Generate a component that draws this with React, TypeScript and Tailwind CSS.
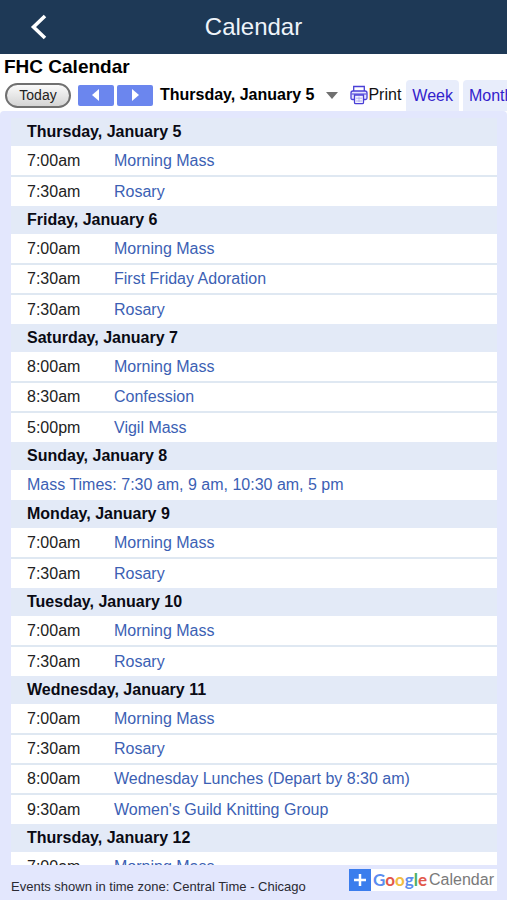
type CalendarEvent = { time?: string; title: string };
type Day = { date: string; events: CalendarEvent[] };

const mass: CalendarEvent = { time: "7:00am", title: "Morning Mass" };
const rosary: CalendarEvent = { time: "7:30am", title: "Rosary" };

const days: Day[] = [
  { date: "Thursday, January 5", events: [mass, rosary] },
  {
    date: "Friday, January 6",
    events: [mass, { time: "7:30am", title: "First Friday Adoration" }, rosary],
  },
  {
    date: "Saturday, January 7",
    events: [
      { time: "8:00am", title: "Morning Mass" },
      { time: "8:30am", title: "Confession" },
      { time: "5:00pm", title: "Vigil Mass" },
    ],
  },
  { date: "Sunday, January 8", events: [{ title: "Mass Times: 7:30 am, 9 am, 10:30 am, 5 pm" }] },
  { date: "Monday, January 9", events: [mass, rosary] },
  { date: "Tuesday, January 10", events: [mass, rosary] },
  {
    date: "Wednesday, January 11",
    events: [
      mass,
      rosary,
      { time: "8:00am", title: "Wednesday Lunches (Depart by 8:30 am)" },
      { time: "9:30am", title: "Women's Guild Knitting Group" },
    ],
  },
  { date: "Thursday, January 12", events: [mass] },
];

function PrinterIcon() {
  return (
    <svg className="h-5 w-[18px] shrink-0" viewBox="0 0 18 20" fill="none" stroke="#4a3fd6" strokeWidth="1.3" aria-hidden="true">
      <path d="M3.700 6V1.500h10.600V6" />
      <path d="M4 14.500H2.500Q1 14.500 1 13V8q0-2 2-2h12q2 0 2 2v5q0 1.500-1.500 1.500H14" fill="#e4e4ff" />
      <path d="M1.500 9h15" strokeWidth="1" />
      <path d="M4.500 10h9v7.500q0 1.200-1.200 1.200H5.700q-1.200 0-1.200-1.200z" fill="#f4f4ff" />
      <path d="M6 13.200h6M6 16h6M9 11.500v5.500" stroke="#a9a6ee" strokeWidth="0.800" />
    </svg>
  );
}

function Toolbar() {
  return (
    <div className="flex h-8 shrink-0 items-end overflow-hidden whitespace-nowrap pl-[5px]">
      <div className="flex h-8 shrink-0 items-center">
        <button className="h-[25px] w-[66px] rounded-full border-2 border-[#707070] bg-gradient-to-b from-[#fafafa] to-[#d4d4d4] text-sm leading-5 text-[#222222]">
          Today
        </button>
        <button aria-label="Previous" className="ml-[7px] flex h-[21px] w-9 items-center justify-center rounded-xs bg-[#6b86ee]">
          <svg className="h-3 w-2" viewBox="0 0 8 12" fill="#ffffff" aria-hidden="true">
            <path d="M7 0v12L0 6z" />
          </svg>
        </button>
        <button aria-label="Next" className="ml-[3px] flex h-[21px] w-9 items-center justify-center rounded-xs bg-[#6b86ee]">
          <svg className="h-3 w-2" viewBox="0 0 8 12" fill="#ffffff" aria-hidden="true">
            <path d="M1 0v12l7-6z" />
          </svg>
        </button>
        <button aria-haspopup="true" className="ml-[7px] flex items-center gap-3 text-base font-bold text-black">
          Thursday, January 5
          <svg className="h-[7px] w-3" viewBox="0 0 12 7" fill="#707070" aria-hidden="true">
            <path d="M0 0h12L6 7z" />
          </svg>
        </button>
        <button className="ml-3 flex items-center text-base text-[#111111]">
          <PrinterIcon />
          Print
        </button>
      </div>
      <nav className="ml-[5px] flex shrink-0 gap-1 text-base text-[#3322cc]">
        <a href="#week" className="flex h-[31px] items-center rounded-t-sm bg-[#e8edfb] px-[6px]">
          Week
        </a>
        <a href="#month" className="flex h-[31px] items-center rounded-t-sm bg-[#e8edfb] px-[6px]">
          Month
        </a>
      </nav>
    </div>
  );
}

function Agenda() {
  return (
    <table className="w-full table-fixed border-collapse text-left text-base leading-5">
      <colgroup>
        <col className="w-[103px]" />
        <col />
      </colgroup>
      {days.map((day) => (
        <tbody key={day.date}>
          <tr className="h-7 bg-[#e3eaf7]">
            <th colSpan={2} scope="rowgroup" className="py-0 pl-4 font-bold text-[#0a0a14]">
              {day.date}
            </th>
          </tr>
          {day.events.map((event) => (
            <tr key={event.title} className="h-[30px] border-b-2 border-[#dfe8f2] bg-white last:border-b-0">
              {event.time && <td className="py-0 pl-4 text-[#222222]">{event.time}</td>}
              <td colSpan={event.time ? 1 : 2} className={event.time ? "py-0" : "py-0 pl-4"}>
                <a href="#event" className="text-[#3c5fb4]">
                  {event.title}
                </a>
              </td>
            </tr>
          ))}
        </tbody>
      ))}
    </table>
  );
}

export default function App() {
  return (
    <div className="flex h-screen flex-col overflow-hidden bg-white font-['Liberation_Sans',Arial,sans-serif]">
      <header className="grid h-[54px] shrink-0 grid-cols-[1fr_auto_1fr] items-center bg-[#1e3956]">
        <button aria-label="Back" className="ml-[30px] w-[17px]">
          <svg className="h-[26px] w-[17px]" viewBox="0 0 17 26" fill="none" stroke="#ffffff" strokeWidth="3.600" aria-hidden="true">
            <path d="M15 2 3.500 13 15 24" />
          </svg>
        </button>
        <h1 className="text-2xl text-[#eef4fa]">Calendar</h1>
      </header>
      <h2 className="h-[25px] shrink-0 pl-1 text-[19px] leading-[25px] font-bold text-black">FHC Calendar</h2>
      <Toolbar />
      <main className="flex min-h-0 flex-1 flex-col rounded-t-sm bg-[#e3e7fd] pt-[7px] pr-[10px] pl-[11px]">
        <div className="min-h-0 flex-1 overflow-y-auto [scrollbar-width:none]">
          <Agenda />
        </div>
        <footer className="flex h-[35px] shrink-0 items-start justify-between whitespace-nowrap">
          <p className="pt-3 text-[13px] leading-5 text-[#2a2a33]">
            Events shown in time zone: Central Time - Chicago
          </p>
          <a href="#google-calendar" className="mt-1 flex h-[22px] items-center bg-white pr-[3px]">
            <svg className="mr-[2px] size-[22px]" viewBox="0 0 22 22" aria-hidden="true">
              <path d="M0 0h22v22H0z" fill="#3b7ded" />
              <path d="M11 5v12M5 11h12" stroke="#ffffff" strokeWidth="2.500" />
            </svg>
            <span className="font-['Lato',sans-serif] text-[17px] leading-5 font-bold">
              <span className="text-[#5b8def]">G</span>
              <span className="text-[#e2574c]">o</span>
              <span className="text-[#f2bd42]">o</span>
              <span className="text-[#5b8def]">g</span>
              <span className="text-[#4caf62]">l</span>
              <span className="text-[#e2574c]">e</span>
            </span>
            <span className="ml-[2px] text-base leading-5 text-[#7a7a7a]">Calendar</span>
          </a>
        </footer>
      </main>
    </div>
  );
}
